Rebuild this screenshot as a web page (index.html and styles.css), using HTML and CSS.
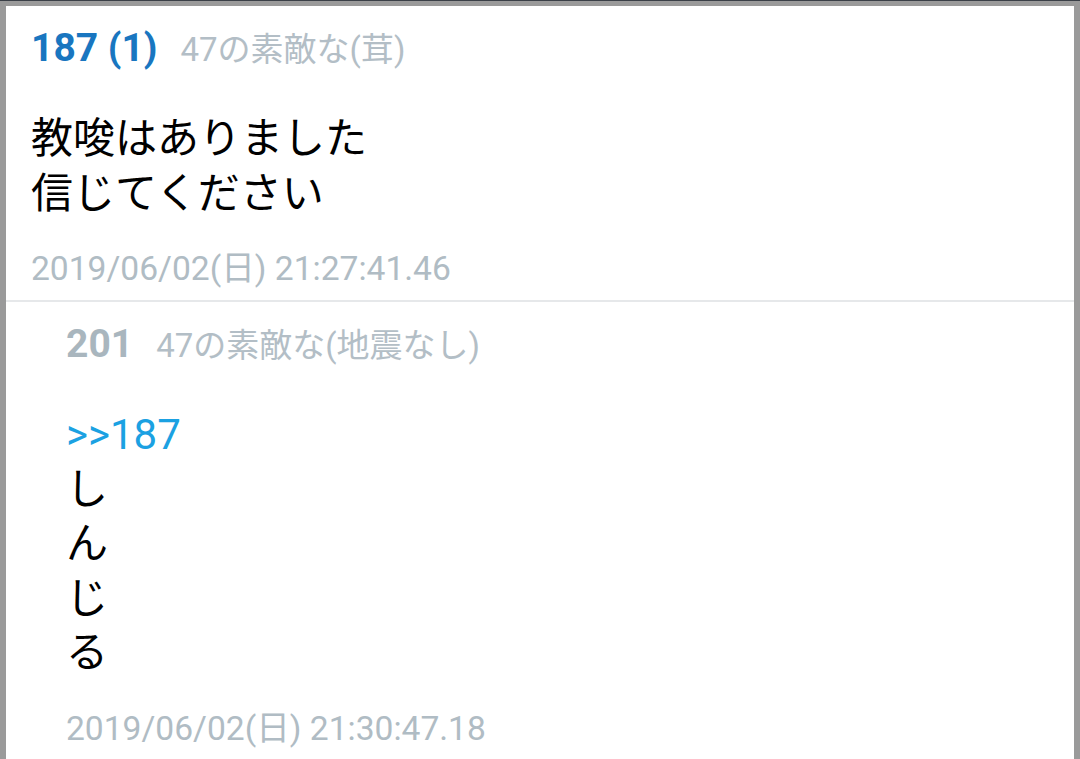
FILE: index.html
```html
<!DOCTYPE html>
<html>
<head>
  <meta charset="UTF-8">
  <title>Thread</title>
  <link rel="stylesheet" href="styles.css">
</head>
<body>
  <div id="thread">
    <div class="post">
      <div class="post-header">
        <span class="post-num">187 (1)</span>
        <span class="post-name">47の素敵な(茸)</span>
      </div>
      <div class="post-body">教唆はありました<br>信じてください</div>
      <div class="post-date">2019/06/02(日) 21:27:41.46</div>
    </div>
    <div class="post reply">
      <div class="post-header">
        <span class="post-num">201</span>
        <span class="post-name">47の素敵な(地震なし)</span>
      </div>
      <div class="post-body"><span class="anchor">&gt;&gt;187</span><br>し<br>ん<br>じ<br>る</div>
      <div class="post-date">2019/06/02(日) 21:30:47.18</div>
    </div>
  </div>
</body>
</html>
```

FILE: styles.css
```css
html, body {
  height: 100%;
}
body {
  margin: 0;
  background-color: #9a9a9a;
  border-top: 1px solid #3a3f47;
  box-sizing: border-box;
  font-family: Roboto, "Noto Sans CJK JP", sans-serif;
  overflow: hidden;
}
#thread {
  margin: 5px 6px 0 6px;
  background-color: #fff;
  height: 100%;
}
.post {
  padding: 18px 26px 11px 25px;
  border-bottom: 2px solid #e6e8ea;
}
.post.reply {
  padding-left: 60px;
  border-bottom: none;
}
.post-header {
  display: flex;
  align-items: baseline;
  gap: 23px;
  line-height: 48px;
}
.post-num {
  font-size: 39px;
  font-weight: bold;
  color: #1976c0;
}
.reply .post-num {
  color: #a9b6be;
}
.post-name {
  font-size: 33px;
  color: #b3bec6;
}
.post-body {
  margin-top: 38px;
  font-size: 42px;
  line-height: 54.5px;
  color: #000;
}
.anchor {
  color: #1ba1e2;
}
.post-date {
  margin-top: 28px;
  font-size: 33.6px;
  line-height: 40px;
  color: #b0bcc4;
}
```
